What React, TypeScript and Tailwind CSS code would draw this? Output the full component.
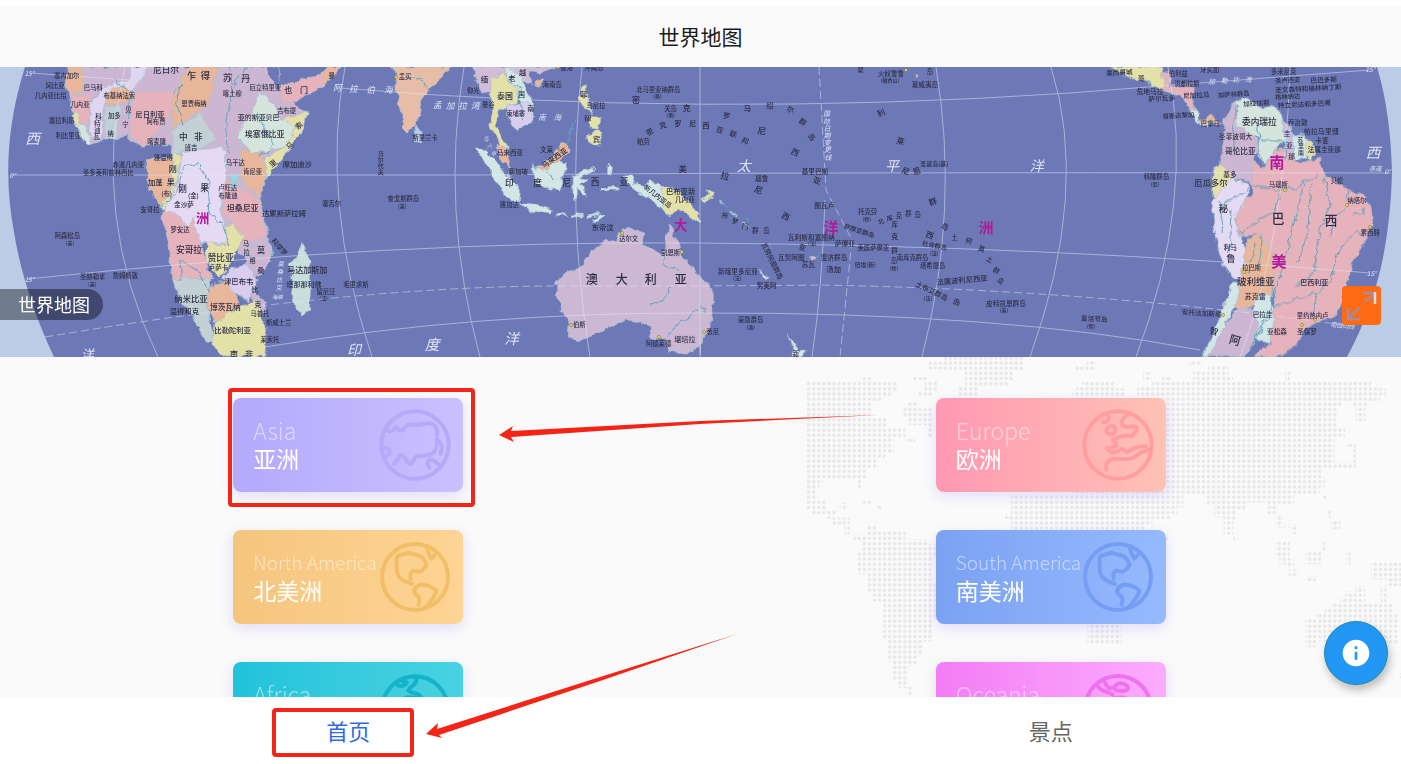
import { MdInfo } from 'react-icons/md';

type Label = [x: number, y: number, text: string, size?: number, rotate?: number];

interface MapSection {
  x: number;
  shapes: { fill: string; d: string }[];
  rivers: string[];
  labels: Label[];
  seas: Label[];
  regions: Label[];
}

interface Continent {
  en: string;
  zh: string;
  card: string;
  stroke: string;
  viewBox: string;
  circle: [number, number, number];
  paths: string[];
  long?: boolean;
  highlighted?: boolean;
}

const americas = [
  'M577 207C545 200 530 185 532 160C532 145 528 130 535 124C550 120 558 116 568 115C580 122 590 120 600 124C612 130 618 142 620 152C612 165 600 175 590 170C575 165 570 175 573 192',
  'M620 95C625 112 628 125 634 132L644 123',
  'M597 269C602 255 598 245 590 240C578 232 585 215 602 210C620 208 640 218 650 228C645 245 635 255 628 265C622 275 615 280 605 282',
];

const continents: Continent[] = [
  {
    en: 'Asia',
    zh: '亚洲',
    card: 'bg-linear-to-r from-[#b4a9fb] to-[#cbc0ff]',
    stroke: '#b5a9f8',
    viewBox: '475 88 216 216',
    circle: [583, 196, 101],
    paths: [
      'M503 154C515 158 520 150 525 142C533 150 545 160 552 144C558 132 570 132 583 135C605 138 610 128 628 131C648 136 652 150 649 168',
      'M649 180C650 205 640 222 625 226C610 230 600 228 586 231C578 236 578 250 570 254C562 250 556 245 554 235C545 225 540 222 535 232C530 240 525 245 520 253',
      'M649 180C658 185 670 198 659 222',
      'M487 207C497 203 508 206 507 218C506 224 503 226 500 228',
      'M627 265C618 255 618 242 630 240C640 240 648 250 655 256',
    ],
    highlighted: true,
  },
  {
    en: 'Europe',
    zh: '欧洲',
    card: 'bg-linear-to-r from-[#ff98b2] to-[#ffc2b5]',
    stroke: '#ff9da1',
    viewBox: '487 89 218 218',
    circle: [596, 198, 102],
    paths: [
      'M550 128C562 132 572 122 566 108',
      'M588 152C586 164 575 168 565 163C558 158 560 148 568 143C578 138 590 142 588 152',
      'M628 102C618 112 612 115 608 125C605 135 608 142 620 143C635 142 650 140 653 147C655 155 645 160 638 172C625 166 600 172 580 182C585 192 595 188 590 200C580 208 570 206 562 209C572 222 585 224 597 216C610 205 612 212 622 220C635 212 655 200 680 202',
      'M560 272C558 245 570 238 600 240C640 243 640 238 655 228C665 220 680 214 692 213',
    ],
  },
  {
    en: 'North America',
    zh: '北美洲',
    card: 'bg-linear-to-r from-[#f4c57e] to-[#ffd494]',
    stroke: '#f2be67',
    viewBox: '479 80 214 214',
    circle: [586, 187, 98],
    paths: americas,
    long: true,
  },
  {
    en: 'South America',
    zh: '南美洲',
    card: 'bg-linear-to-r from-[#7ba2f2] to-[#96baff]',
    stroke: '#759ef3',
    viewBox: '479 80 214 214',
    circle: [586, 187, 98],
    paths: americas,
    long: true,
  },
  {
    en: 'Africa',
    zh: '非洲',
    card: 'bg-linear-to-r from-[#1fc3da] to-[#48d2e2]',
    stroke: '#15b2ca',
    viewBox: '479 472 214 214',
    circle: [586, 580, 98],
    paths: [
      'M532 507C545 514 555 510 562 500L548 496',
      'M590 490C592 508 570 512 566 524C575 536 602 528 604 545C600 552 570 540 556 546C540 560 545 590 560 600C580 600 590 610 592 640C605 650 620 620 625 590',
    ],
  },
  {
    en: 'Oceania',
    zh: '大洋洲',
    card: 'bg-linear-to-r from-[#f27cf4] to-[#fcacff]',
    stroke: '#ee72ee',
    viewBox: '493 471 214 214',
    circle: [600, 578, 98],
    paths: [
      'M540 510C550 530 570 522 584 536',
      'M562 500C568 516 578 520 590 512C600 496 626 500 630 516C624 530 606 524 594 522',
      'M588 548C600 542 618 542 626 548C640 570 630 600 600 604C575 600 570 580 588 548',
    ],
  },
];

// Each section is a third-scale tile of the map, placed at its own x.
const sections: MapSection[] = [
  {
    x: 0,
    shapes: [
      { fill: '#ccb6d2', d: 'M215 20H800L835 90L860 100L900 150L925 155L905 215L870 270L800 345L780 420L810 545L815 600L780 640L700 560L520 540L512 250L410 258L380 225L320 240L265 255L220 180L205 100Z' },
      { fill: '#e8b69a', d: 'M205 20L250 20L250 95L210 105L195 70Z' },
      { fill: '#e6b2bc', d: 'M212 100L275 105L265 190L235 195L212 150Z' },
      { fill: '#e3e0a8', d: 'M215 155L240 165L245 220L222 190Z' },
      { fill: '#d5e4dc', d: 'M240 195L262 200L270 250L262 256L232 222Z' },
      { fill: '#e0d6f2', d: 'M270 130L300 95L330 70L390 60L395 20L440 20L430 60L380 100L310 130L305 235L270 235Z' },
      { fill: '#e8b69a', d: 'M330 85L375 75L410 105L380 130L308 128Z' },
      { fill: '#bfd0d8', d: 'M318 135L362 135L350 235L312 240Z' },
      { fill: '#e6b2bc', d: 'M400 100L520 88L528 125L495 190L460 230L435 260L412 250L385 222Z' },
      { fill: '#e8b69a', d: 'M560 20L655 20L625 130L540 195L512 205L520 105Z' },
      { fill: '#c3d0d4', d: 'M515 215L600 158L645 235L620 262L560 268L520 290Z' },
      { fill: '#d5e4dc', d: 'M775 100L822 130L845 180L890 200L850 262L760 282L715 235L720 200L758 160Z' },
      { fill: '#e3e0a8', d: 'M845 180L925 155L905 215L860 280L800 358L795 290L850 262L890 200Z' },
      { fill: '#e6b2bc', d: 'M845 75L960 45L975 75L900 118L843 138Z' },
      { fill: '#e8b69a', d: 'M958 45L985 20L1025 22L975 75Z' },
      { fill: '#6c79b6', d: 'M800 20H836L842 70L840 92L822 70Z' },
      { fill: '#e8b69a', d: 'M722 268L790 285L800 345L780 415L720 355Z' },
      { fill: '#e8b69a', d: 'M440 300L520 290L515 400L480 440L445 380Z' },
      { fill: '#e3e0a8', d: 'M520 280L545 290L525 380L500 455L480 440L510 400Z' },
      { fill: '#e4daf4', d: 'M548 275L670 262L680 350L660 460L690 550L600 545L530 480L490 455L530 380Z' },
      { fill: '#e6b2bc', d: 'M690 360L780 420L785 490L805 530L730 550L700 490L665 460L668 385Z' },
      { fill: '#8fdbe2', d: 'M694 346L714 348L712 388L696 384Z' },
      { fill: '#e6b2bc', d: 'M485 455L530 460L560 500L580 475L600 540L635 660L515 655L508 560Z' },
      { fill: '#e3e0a8', d: 'M620 545L680 555L675 500L700 490L730 530L700 600L660 655L615 600Z' },
      { fill: '#d8cdee', d: 'M690 625L740 615L775 660L745 725L700 700L670 655Z' },
      { fill: '#ccb6d2', d: 'M745 560L812 545L815 600L775 645L760 690L797 730L795 760L765 740L750 700L775 660L740 615Z' },
      { fill: '#c3d0d4', d: 'M515 655L630 660L620 740L645 845L620 850L575 760L540 720Z' },
      { fill: '#e8b69a', d: 'M630 675L680 665L725 740L685 790L645 790L620 740Z' },
      { fill: '#e3e0a8', d: 'M645 790L720 740L765 720L785 765L797 830L795 888H665L640 850Z' },
      { fill: '#c7deda', d: 'M905 545L918 572L930 600L932 680L928 755L905 762L885 735L875 705L880 660L868 615L888 590Z' },
    ],
    rivers: [
      'M690 20L695 90L740 20M685 280L680 190L695 90M520 100L545 70L530 130L550 200',
      'M480 445L530 400L550 320L600 310L630 370L625 450L670 500L690 560',
      'M380 180L390 90L340 60M780 290L820 260L770 160M545 660L540 600L600 640L630 700',
    ],
    labels: [
      [200, 48, '塞内加尔'], [165, 78, '冈比亚'], [152, 108, '几内亚比绍'], [240, 133, '几内亚'], [185, 183, '塞拉利昂'],
      [205, 228, '利比里亚'], [280, 84, '巴马科'], [358, 108, '布基纳法索'], [450, 160, '尼日利亚', 22], [468, 186, '阿布贾'],
      [498, 26, '尼日尔', 26], [575, 44, '乍', 28], [616, 44, '得', 28], [682, 52, '苏', 28], [737, 54, '丹', 28],
      [582, 130, '恩贾梅纳'], [697, 100, '喀土穆'], [796, 82, '厄立特里亚'], [865, 88, '也', 24], [912, 88, '门', 24],
      [860, 152, '吉布提'], [776, 172, '亚的斯亚贝巴', 21], [794, 220, '埃塞俄比亚', 24], [550, 228, '中', 26], [595, 228, '非', 26],
      [573, 264, '班吉'], [470, 245, '喀麦隆'], [490, 292, '雅温得'], [385, 314, '赤道几内亚'], [325, 338, '圣多美和普林西比'],
      [466, 366, '加蓬', 22], [518, 326, '刚', 24], [512, 366, '果', 24], [500, 402, '(布)'], [548, 383, '刚', 26], [614, 382, '果', 26],
      [580, 407, '(金)'], [552, 431, '金沙萨', 20], [450, 448, '安哥拉'], [706, 308, '乌干达'], [758, 335, '肯尼亚'], [683, 382, '卢旺达'],
      [684, 408, '布隆迪'], [728, 444, '坦桑尼亚', 24], [852, 458, '达累斯萨拉姆', 22], [995, 432, '塞舌尔'], [892, 312, '摩加迪沙', 22],
      [895, 195, '索', 22, -40], [868, 255, '马', 22, -40], [818, 308, '里', 22, -40], [540, 508, '罗安达'], [567, 566, '安哥拉', 26],
      [662, 592, '赞比亚', 26], [655, 622, '卢萨卡'], [738, 550, '马'], [740, 578, '拉'], [758, 602, '维'], [783, 570, '莫', 24], [783, 630, '桑', 22],
      [840, 560, '科摩罗', 20, 50], [922, 628, '马达加斯加', 24], [912, 672, '塔那那利佛', 21], [1068, 673, '毛里求斯'], [978, 694, '留尼汪'],
      [971, 714, '(法)', 15], [716, 662, '津巴布韦', 22], [765, 686, '比', 20], [573, 714, '纳米比亚', 25], [553, 752, '温得和克', 22],
      [676, 740, '博茨瓦纳', 23], [774, 732, '克', 22], [780, 762, '马普托'], [836, 788, '斯威士兰'], [698, 808, '比勒陀利亚', 22], [810, 840, '莱索托'],
      [702, 882, '南', 24], [747, 882, '非', 24], [202, 527, '阿森松岛'], [210, 548, '(英)', 15], [278, 650, '圣赫勒拿'], [277, 672, '(英)', 15],
      [376, 648, '詹姆斯敦'], [295, 170, '科'], [292, 190, '特'], [292, 211, '迪'], [290, 230, '瓦'], [343, 168, '加多'], [332, 222, '纳'],
      [385, 148, '贝'], [376, 193, '宁'], [995, 46, '曼'],
    ],
    seas: [[98, 232, '西', 44], [262, 882, '洋', 38], [1012, 82, '阿', 26], [88, 38, '15°', 20], [38, 346, '0°', 20], [88, 656, '15°', 20], [842, 610, '莫', 18], [840, 634, '桑', 18], [838, 658, '比', 18], [836, 682, '克', 18], [832, 712, '海峡', 16]],
    regions: [[608, 474, '洲', 40]],
  },
  {
    x: 350,
    shapes: [
      { fill: '#e8bda8', d: 'M120 20H305L275 52L240 80L212 120L210 145L208 165L190 200L172 217L160 205L150 150L138 90L142 40Z' },
      { fill: '#b9cbe8', d: 'M198 195L215 220L212 248L195 245Z' },
      { fill: '#d2bdd8', d: 'M368 20H620L570 40L540 30L545 70L500 60L450 40L420 95L390 100L375 50Z' },
      { fill: '#e8b69a', d: 'M560 55L578 60L572 78L555 72Z' },
      { fill: '#e3e0a8', d: 'M425 55L460 40L510 80L505 130L450 150L435 195L480 270L455 260L418 195L430 150L420 90Z' },
      { fill: '#d3e6e6', d: 'M470 20L510 50L550 130L550 180L500 215L490 195L530 160L500 90L470 60Z' },
      { fill: '#d8cdee', d: 'M470 140L525 130L548 140L545 185L500 213L470 170Z' },
      { fill: '#e8b69a', d: 'M440 255L470 265L486 325L450 300Z' },
      { fill: '#d3e6e6', d: 'M378 262L410 275L435 300L460 330L490 365L508 395L505 425L470 410L430 350L400 300Z' },
      { fill: '#d3e6e6', d: 'M508 428L550 432L610 450L602 462L540 452Z' },
      { fill: '#d3e6e6', d: 'M545 312L560 330L625 300L650 315L630 390L600 390L560 375Z' },
      { fill: '#e8b69a', d: 'M560 325L600 300L640 248L665 270L630 300L590 325Z' },
      { fill: '#d3e6e6', d: 'M670 350L690 335L730 322L738 330L690 348L715 362L690 372L712 408L698 408L682 382L682 420L668 418Z' },
      { fill: '#e3e0a8', d: 'M695 80L712 78L710 110L730 165L718 150L700 140L688 120ZM705 240L745 205L757 225L752 255L735 255ZM710 165L750 175L745 205L720 200Z' },
      { fill: '#d3e6e6', d: 'M815 350L845 345L850 370L880 380L900 362L940 375L940 455L900 415L860 392L840 375Z' },
      { fill: '#d3e6e6', d: 'M775 310L785 320L780 345L772 340ZM750 385L808 382L806 390L752 392ZM622 460L650 462V467L622 466ZM665 464L700 466V471L665 470ZM715 465L745 460L748 466L718 471ZM725 485L755 462L765 466L735 488Z' },
      { fill: '#e3e0a8', d: 'M940 372L990 398L1015 425L1055 485L1025 475L990 450L960 470L935 455Z' },
      { fill: '#ccb8d2', d: 'M805 515L840 505L885 515L880 550L915 572L938 588L948 535L958 492L970 530L986 548L990 580L1000 600L1030 625L1055 655L1080 690V810L1055 855L1010 885L985 882L960 870L945 840L925 832L905 838L900 800L870 785L830 780L795 795L760 812L720 830L690 842L658 835L660 790L640 755L625 720L618 670L640 640L675 630L700 615L715 585L740 558L770 540L800 545Z' },
    ],
    rivers: [
      'M955 830L990 785L1060 745M900 740L940 720L965 680M940 590L945 620L990 630M470 60L510 90L515 180M180 55L220 65L240 95M590 330L610 360M650 260L675 180',
    ],
    labels: [
      [165, 50, '孟买'], [225, 234, '斯里兰卡'], [92, 282, '马', 18], [92, 300, '尔', 18], [92, 318, '代', 18], [92, 336, '夫', 18],
      [160, 415, '查戈斯群岛'], [157, 436, '(英)', 15], [403, 55, '缅', 22], [370, 92, '仰光'], [486, 52, '老', 22], [518, 34, '越', 22],
      [465, 108, '泰国', 24], [515, 103, '国', 20], [542, 144, '南', 20], [415, 135, '曼谷'], [497, 160, '柬埔寨'], [607, 74, '海南岛'], [650, 24, '香港'],
      [732, 24, '冲绳岛'], [480, 277, '马来西亚', 20], [590, 268, '文莱'], [612, 292, '马来西亚', 22, -35], [505, 335, '新加坡'], [478, 366, '印', 26],
      [563, 366, '度', 26], [650, 366, '尼', 26], [735, 364, '西', 26], [822, 364, '亚', 26], [478, 434, '雅加达'], [758, 500, '东帝汶', 22],
      [702, 102, '菲', 22], [738, 136, '马尼拉'], [714, 174, '律', 22], [740, 236, '宾', 22], [925, 88, '北马里亚纳群岛'], [922, 108, '(美)', 15],
      [858, 118, '密', 24], [1010, 143, '克', 24], [962, 146, '关岛'], [962, 164, '(美)', 15], [898, 214, '密', 22, -35], [938, 193, '克', 22, -15],
      [984, 188, '罗', 22], [1028, 188, '尼', 22], [880, 244, '帕劳', 20], [998, 326, '美', 24],
      [992, 392, '巴布亚新', 22], [1005, 416, '几内亚', 20], [925, 408, '新几内亚岛', 20, 38], [836, 536, '达尔文', 19], [962, 578, '凯恩斯', 19],
      [725, 656, '澳', 36], [815, 656, '大', 36], [902, 656, '利', 36], [992, 656, '亚', 36], [688, 795, '伯斯'], [926, 850, '阿德莱德', 19], [1005, 838, '堪培拉', 21],
    ],
    seas: [[10, 84, '拉', 26], [62, 86, '伯', 26], [115, 88, '海', 26], [262, 132, '孟', 26], [300, 134, '加', 26], [338, 134, '拉', 26], [376, 134, '湾', 26], [576, 170, '南', 22], [622, 170, '海', 22], [408, 236, '马', 16], [418, 258, '六', 16], [430, 282, '甲', 16], [12, 868, '印', 42], [246, 852, '度', 44], [485, 834, '洋', 44]],
    regions: [[992, 494, '大', 40]],
  },
  {
    x: 700,
    shapes: [
      { fill: '#ccb8d2', d: 'M0 655L25 670L40 710L38 780L15 820L0 880Z' },
      { fill: '#d3e6e6', d: 'M262 825L290 855L295 875L320 872L300 888H275L285 860ZM178 625L205 655L195 660Z' },
      { fill: '#e6b2bc', d: 'M332 590L345 588L348 600L334 600ZM645 42L655 45L652 58Z' },
      { fill: '#e3e0a8', d: 'M20 385L40 395L35 415L10 425L0 415L28 408ZM62 420L75 435L65 432ZM88 455L112 468L108 472ZM125 485L145 495L140 500Z' },
    ],
    rivers: ['M0 740L15 745V758M60 425L80 440M95 455L120 475M135 470L155 485M350 590L362 575M205 550L215 570'],
    labels: [
      [482, 28, '夏'], [573, 38, '火奴鲁鲁', 20], [570, 58, '(檀香山)', 15], [675, 72, '夏威夷岛', 20], [690, 36, '岛'], [80, 166, '罗', 22, 10],
      [142, 142, '马', 22], [210, 134, '绍', 22], [272, 146, '尔', 22, 20], [310, 184, '群', 22, 35], [337, 230, '岛', 22, 50], [18, 195, '西', 22],
      [60, 208, '亚', 22, 15], [100, 220, '联', 22, 15], [136, 241, '邦', 22, 20], [186, 210, '尼', 26, 10], [286, 275, '西', 24, 25], [76, 346, '拉', 26, 15],
      [185, 354, '瑙鲁', 20], [177, 388, '尼', 26, 20], [345, 334, '基里巴斯', 20], [352, 360, '亚', 24, 20], [373, 434, '图瓦卢', 20], [258, 468, '西', 24, 30],
      [76, 466, '所', 20, 15], [106, 482, '罗', 20, 15], [136, 498, '门', 20, 10], [166, 510, '群', 20], [200, 510, '岛', 20], [543, 157, '利', 24, -25],
      [602, 242, '莱', 24, 15], [618, 332, '尼', 24, 20], [650, 332, '恩', 24, -20], [703, 312, '圣诞岛(基)', 18], [698, 423, '群', 24, -20], [736, 498, '岛', 22, 30],
      [503, 456, '托克劳', 19], [500, 475, '(新)', 15], [543, 484, '北', 19, -20], [569, 474, '库', 19, -10], [597, 466, '克', 19], [625, 462, '群', 19], [653, 464, '岛', 19],
      [584, 494, '库'], [584, 528, '克', 22], [584, 570, '群', 20], [582, 602, '岛'], [582, 624, '(新)', 15], [478, 512, '萨摩亚群岛', 19, 18],
      [334, 530, '瓦利斯和富图纳', 20], [337, 549, '(法)', 15], [308, 560, '亚', 22, 20], [435, 550, '萨摩亚', 20], [520, 562, '美属萨摩亚', 19],
      [274, 590, '瓦努阿图', 20], [402, 591, '斐济群岛', 20], [325, 612, '苏瓦', 20], [401, 625, '汤加', 22], [496, 613, '纽埃(新)', 17],
      [218, 602, '瓦努阿图群岛', 20, 64], [114, 633, '新喀里多尼亚', 20], [112, 653, '(法)', 15], [200, 676, '努美阿', 20], [690, 524, '西', 24, 20],
      [704, 556, '社会群岛', 19, 12], [703, 578, '(法)', 15], [638, 594, '南库克群岛', 19], [698, 617, '塔希提岛', 19], [763, 532, '土'], [807, 542, '阿', 20, 10],
      [846, 565, '莫', 20, 20], [870, 597, '土', 20, 30], [890, 630, '群', 20, 30], [903, 662, '岛', 20, 40], [786, 658, '法属波利尼西亚', 22, -5],
      [696, 692, '土布艾群岛', 21, 26], [770, 724, '岛', 22, 15], [684, 714, '(法)', 15], [918, 728, '皮特凯恩群岛', 20], [912, 748, '(英)', 15],
      [152, 779, '豪勋爵岛', 19], [152, 800, '(澳)', 15], [38, 816, '悉尼'], [288, 882, '新'],
    ],
    seas: [[132, 316, '太', 42], [576, 314, '平', 42], [1010, 314, '洋', 42], [380, 160, '国', 20], [380, 183, '际', 20], [381, 204, '日', 20], [381, 226, '期', 20], [382, 247, '变', 20], [383, 268, '更', 20], [384, 290, '线', 20]],
    regions: [[393, 500, '洋', 44], [858, 500, '洲', 44]],
  },
  {
    x: 1041,
    shapes: [
      { fill: '#e3e0a8', d: 'M205 20H365L372 60L400 95L430 105L385 100L320 65L270 55Z' },
      { fill: '#e6b2bc', d: 'M360 40L385 35L390 75L460 85L455 130L470 160L445 145L420 105L370 90Z' },
      { fill: '#d3e6e6', d: 'M440 145L465 150L480 190L500 200L520 180L478 195Z' },
      { fill: '#e8b69a', d: 'M475 180L510 165L545 190L525 195L505 180L485 200Z' },
      { fill: '#ccb6d2', d: 'M548 190L570 140L590 115L600 120L590 160L630 220L660 260L640 300L645 375L560 345L535 310L548 250Z' },
      { fill: '#d5e4dc', d: 'M585 120L620 115L655 140L710 140L730 190L735 240L700 270L670 315L655 290L650 235L590 200Z' },
      { fill: '#c9bce2', d: 'M722 180L750 195L765 305L735 290L730 240Z' },
      { fill: '#d3e6e6', d: 'M755 220L795 225L800 290L765 300Z' },
      { fill: '#e3e0a8', d: 'M793 230L825 265L808 300L795 285Z' },
      { fill: '#e3e0a8', d: 'M518 325L535 312L575 345L545 390L525 425L512 405Z' },
      { fill: '#e6b2bc', d: 'M632 310L670 320L700 270L735 265L765 310L810 300L842 295L835 325L845 340L875 355L905 380L960 405L990 440L995 490L970 550L945 590L930 615L925 650L905 720L880 770L835 782L800 800L770 845L745 870L720 890H635L690 850L680 780L700 740L700 600L660 520L600 530L580 460L610 420L640 400Z' },
      { fill: '#e4daf4', d: 'M512 425L545 390L570 350L630 380L610 430L580 470L600 530L622 600L600 665L560 640L535 580L520 500Z' },
      { fill: '#e8b69a', d: 'M620 535L660 520L700 590L700 670L690 720L600 750L580 735L600 640Z' },
      { fill: '#d3e6e6', d: 'M575 665L595 680L580 740L550 800L510 890H485L530 790Z' },
      { fill: '#d3e6e6', d: 'M655 700L690 705L700 790L685 850L650 840L630 770Z' },
      { fill: '#ccb6d2', d: 'M590 745L630 745L655 800L640 850L615 890H500L545 810Z' },
    ],
    rivers: [
      'M535 420L545 440L540 520M545 425L600 405L640 375L700 390L760 385L830 345M570 450L565 580M600 520L700 450L720 400',
      'M790 370L750 520L720 640L690 740L620 885M810 370L800 520L770 610M850 350L865 440L830 540L820 640L760 680',
      'M970 530L945 510L890 580L870 660L830 700L810 770M915 420L925 390M870 530L880 470L915 440M940 460L965 465L970 440',
      'M650 190L655 270L670 320M590 140L575 200L580 270M665 520L655 620M640 550L620 640M650 830L700 740L820 700M660 240L730 245L730 300',
    ],
    labels: [
      [235, 36, '墨西哥城', 20, -3], [300, 54, '哥', 20], [412, 42, '伯利兹'], [506, 30, '牙买加'], [327, 92, '危地马拉', 20], [438, 72, '洪都拉斯', 19],
      [362, 114, '萨尔瓦多', 20, -3], [466, 104, '尼加拉瓜', 20, -3], [578, 102, '加萨林群岛', 19, -4], [412, 166, '哥斯达黎加', 19, -4], [508, 190, '巴拿马'],
      [728, 36, '多米尼克'], [740, 60, '圣卢西亚', 19, -2], [848, 58, '巴巴多斯', 20, -3], [802, 84, '圣文森特和格林纳丁斯', 20, -3], [740, 109, '格林纳达', 19, -3],
      [790, 131, '特立尼达和多巴哥', 20, -3], [646, 128, '加拉加斯', 20, -4], [655, 184, '委内瑞拉', 26], [770, 187, '乔治敦', 20], [841, 214, '帕拉马里博', 21],
      [843, 240, '卡宴', 20], [850, 268, '法属圭亚那', 20], [738, 218, '圭', 20], [745, 254, '亚', 20], [752, 288, '那', 20], [778, 238, '苏', 18], [780, 258, '里', 18], [780, 277, '南', 18],
      [584, 229, '圣菲波哥大', 20], [598, 273, '哥伦比亚', 23], [567, 341, '基多', 20], [510, 367, '厄瓜多尔', 25], [346, 350, '科隆群岛', 19], [342, 370, '(厄)', 15],
      [547, 443, '秘', 28], [570, 594, '鲁', 28], [568, 560, '利马', 20], [712, 375, '马瑙斯', 19], [711, 472, '巴', 38], [870, 480, '西', 38], [888, 361, '贝伦'],
      [948, 422, '纳塔尔'], [988, 518, '累西腓', 19], [632, 624, '拉巴斯', 19], [645, 664, '玻利维亚', 28], [643, 708, '苏克雷', 21], [820, 665, '巴西利亚', 21],
      [815, 766, '里约热内卢', 19], [798, 813, '圣保罗', 20], [665, 762, '巴拉圭', 20], [708, 812, '亚松森', 20], [482, 758, '安托法加斯塔', 20, 4],
      [160, 775, '复活节岛', 20, 3], [150, 796, '(智)', 15], [520, 812, '智', 26, 15], [583, 838, '阿', 34, 15],
    ],
    seas: [[512, 64, '加', 20], [550, 60, '勒', 20], [585, 58, '比', 20], [622, 56, '海', 20], [996, 274, '西', 44], [1003, 325, '赤道', 19], [1040, 334, '0°', 20], [992, 640, '15°', 20], [988, 28, '15°', 20], [905, 796, '南回归线', 18, 6]],
    regions: [[708, 302, '南', 46], [714, 599, '美', 46]],
  },
];

function MapText({ items, className }: { items: Label[]; className: string }) {
  return (
    <g className={className} textAnchor="middle" dominantBaseline="central">
      {items.map(([x, y, text, size = 19, rotate = 0], index) => (
        <text key={index} x={x} y={y} fontSize={size} transform={`rotate(${rotate} ${x} ${y})`}>
          {text}
        </text>
      ))}
    </g>
  );
}

function WorldMap() {
  return (
    <svg
      viewBox="0 67 1401 290"
      preserveAspectRatio="xMidYMid slice"
      className="block h-full w-full bg-[#bacce6]"
      role="img"
      aria-label="世界地图"
    >
      <defs>
        {/* Roughens straight polygon edges into coastlines */}
        <filter id="coast" x="-5%" y="-5%" width="110%" height="110%">
          <feTurbulence type="fractalNoise" baseFrequency="0.12" numOctaves={3} seed={4} result="noise" />
          <feDisplacementMap in="SourceGraphic" in2="noise" scale={7} xChannelSelector="R" yChannelSelector="G" />
          <feGaussianBlur stdDeviation={0.4} />
        </filter>
      </defs>

      <path fill="#6c79b6" d="M25 67C5 130 5 185 14 232C20 270 34 315 54 357H1347C1375 305 1390 250 1392 172C1391 135 1387 100 1377 67Z" />

      <g filter="url(#coast)">
        {sections.map((section) => (
          <g key={section.x} transform={`translate(${section.x} 60) scale(.3333)`}>
            {section.shapes.map((shape, index) => (
              <path key={index} d={shape.d} fill={shape.fill} stroke="#a9c4d2" strokeWidth={2} strokeLinejoin="round" />
            ))}
            <g fill="none" stroke="#5fa3bd" strokeWidth={3} strokeLinejoin="round">
              {section.rivers.map((d) => (
                <path key={d} d={d} />
              ))}
            </g>
          </g>
        ))}
      </g>

      {/* Graticule */}
      <g fill="none" stroke="#e6eaf8" strokeWidth={1} opacity={0.5}>
        <path d="M30 73L130 80M340 88Q700 118 1070 93L1370 70" />
        <path d="M10 175H480Q740 172 1391 173" />
        <path d="M27 279Q400 240 700 243Q1050 246 1370 273" />
        <path d="M265 347Q480 312 700 313Q1000 312 1200 350" />
        <path d="M45 337Q350 286 560 286T820 285Q1100 290 1350 326" strokeDasharray="8 4" />
        <path d="M125 67Q90 215 158 357M345 67Q320 200 372 357M464 67Q440 210 480 357M582 67Q566 210 590 357M700 67V357" />
        <path d="M936 67Q960 210 922 357M1051 67Q1090 190 1030 357M1168 67Q1195 200 1136 357M1290 67Q1285 240 1240 357" />
        <path d="M819 67L826 190L852 240L840 357" strokeDasharray="8 4" />
        <path d="M825 200Q822 290 812 357" />
      </g>

      {sections.map((section) => (
        <g key={section.x} transform={`translate(${section.x} 60) scale(.3333)`}>
          <MapText items={section.labels} className="fill-[#2c2c44] font-medium" />
          <MapText items={section.seas} className="fill-[#dfe4f4] italic" />
          <MapText items={section.regions} className="fill-[#b5189a] font-bold" />
        </g>
      ))}

      <g fill="#e4dc3c" stroke="#6b6a3a" strokeWidth={0.5}>
        {[[396, 77], [558, 67], [622, 233], [682, 252], [571, 325], [659, 337], [704, 332], [906, 70], [1285, 190], [1347, 205], [1370, 227], [1244, 272], [1223, 315], [1302, 325], [1315, 320]].map(([x, y]) => (
          <circle key={`${x}-${y}`} cx={x} cy={y} r={1.6} />
        ))}
      </g>
    </svg>
  );
}

function DottedWorld() {
  return (
    <svg viewBox="800 357 601 340" className="absolute top-0 right-0 h-[340px] w-[601px]" aria-hidden="true">
      <defs>
        <pattern id="dots" x={806.2} y={381.2} width={5.06} height={5.16} patternUnits="userSpaceOnUse">
          <circle cx={2.5} cy={2.5} r={1.8} fill="#e8e8ea" />
        </pattern>
        <clipPath id="land">
          <path
            transform="translate(800 350) scale(.3833 .3349)"
            d="M17 93H160V80H188V93H240V138H217V155H188V200H225V230H275V275H300V262H245V310H222V325H205V355H175V385H60V410H45V450H70V480H120V455H105V475L85 500H130V550H115V525H85V505H70V490H30V475H17Z
              M295 80H335V95H358V125H345V140H310V125H325V95H295ZM335 35H375V20H585V65H557V95H545V110H465V138H415V110H430V65H375V58H335Z
              M242 95H255V125H242ZM282 155H308V175H345V260H332V225H282V200H270V170H282ZM150 380H162V415H150ZM165 448H188V462H165ZM200 462H215V475H200Z
              M140 550H175V525H200V540H275V565H330V580H360V620H345V700H360V800H345V870H320V915H305V945H282V1005H295V1040H282V1010H255V990H242V930H230V860H217V750H190V720H175V670H150V600H162V568H140Z
              M720 50H748V33H772V60H720ZM895 65H917V92H895ZM1015 33H1050V48H1015ZM710 125H722V110H735V95H825V115H850V138H880V108H920V95H945V80H970V93H1025V62H1065V48H1118V78H1130V93H1265V62H1278V93H1490V108H1505V115H1528V140H1515V155H1480V175H1475V213H1450V175H1440V155H1415V170H1400V230H1422V258H1395V350H1360V380H1370V410H1355V430H1290V460H1245V490H1260V520H1300V550H1285V530H1240V490H1215V455H1165V480H1140V510H1130V550H1105V500H1080V460H1055V430H1000V470H985V490H965V505H920V520H900V550H960V570H840V880H750V820H735V560H550V505H535V490H550V430H710Z
              M1425 280H1450V353H1370V335H1440V290H1425ZM1375 480H1385V510H1410V535H1385V500H1375ZM1240 570H1278V625H1290V650H1265V640H1250V620H1240ZM1318 600H1370V570H1360V640H1318ZM1425 600H1437V640H1425ZM1490 635H1568V705H1530V685H1490ZM1275 655H1300V675H1275ZM1320 675H1345V690H1320ZM1370 430H1378V445H1363V430Z
              M1318 800H1345V785H1370V770H1385V755H1410V740H1422V720H1450V705H1475V755H1515V705H1530V755H1545V790H1560V880H1380V870H1345V888H1318ZM1565 965H1580V980H1565ZM1130 555H1142V568H1130Z"
          />
        </clipPath>
      </defs>
      <rect x={800} y={357} width={601} height={340} fill="url(#dots)" clipPath="url(#land)" />
    </svg>
  );
}

function ContinentCard({ continent }: { continent: Continent }) {
  const [cx, cy, r] = continent.circle;

  return (
    <div className="relative">
      <button
        className={`flex h-[94px] w-[230px] items-center justify-between rounded-lg pr-3 pl-5 text-left shadow-[0_4px_14px_rgba(110,90,240,0.18)] ${continent.card}`}
      >
        <span className="flex flex-col pb-[3px] whitespace-nowrap text-white">
          <span className={`leading-[28px] font-light opacity-50 ${continent.long ? 'text-[19px]' : 'text-[23px]'}`}>
            {continent.en}
          </span>
          <span className="text-[23px] leading-[28px]">{continent.zh}</span>
        </span>
        <svg
          viewBox={continent.viewBox}
          className="-ml-6 size-[72px] shrink-0"
          fill="none"
          stroke={continent.stroke}
          strokeWidth={12}
          strokeLinecap="round"
          strokeLinejoin="round"
          aria-hidden="true"
        >
          <circle cx={cx} cy={cy} r={r} />
          {continent.paths.map((d) => (
            <path key={d} d={d} />
          ))}
        </svg>
      </button>
      {continent.highlighted && (
        <div className="pointer-events-none absolute -top-[10px] -left-[5px] h-[119px] w-[247px] rounded-sm border-4 border-[#f42516]" />
      )}
    </div>
  );
}

export default function App() {
  return (
    <div className="relative flex h-screen flex-col overflow-hidden bg-[#fafafa] font-['Noto_Sans_CJK_SC',sans-serif]">
      <header className="flex h-[67px] shrink-0 items-center justify-center border-t-[6px] border-white">
        <h1 className="text-[21px] text-[#1c1c1c]">世界地图</h1>
      </header>

      {/* Map banner */}
      <section className="relative h-[290px] shrink-0 overflow-hidden">
        <WorldMap />
        <span className="absolute bottom-[37px] left-0 flex h-[31px] items-center rounded-r-full bg-black/40 pr-[13px] pl-[18px] text-[18px] text-white">
          世界地图
        </span>
        <button
          aria-label="全屏"
          className="absolute right-5 bottom-8 flex size-[39px] items-center justify-center rounded-sm bg-[#ff6a13]"
        >
          <svg viewBox="0 0 39 39" className="size-full" fill="none" strokeWidth={2.5}>
            <path stroke="#a98a95" d="M21 7H33M32 8L23 16" />
            <path stroke="#e2e0ee" d="M33 6V18" />
            <path stroke="#a98a95" d="M6 22V33H18M7 32L17 22" />
          </svg>
        </button>
      </section>

      {/* Continents */}
      <main className="relative min-h-0 flex-1 overflow-hidden">
        <DottedWorld />
        <div className="relative grid grid-cols-2 gap-y-[38px] pt-[41px]">
          {continents.map((continent) => (
            <div key={continent.en} className="flex justify-center odd:pr-1">
              <ContinentCard continent={continent} />
            </div>
          ))}
        </div>
      </main>

      <nav className="grid h-[67px] shrink-0 grid-cols-2 bg-white text-[22px]">
        <a href="#home" className="relative flex items-center justify-center pr-1 text-[#2f6be0]">
          首页
          <span className="absolute top-[11px] left-1/2 -ml-[78px] h-[49px] w-[142px] rounded-sm border-4 border-[#f42516]" />
        </a>
        <a href="#spots" className="flex items-center justify-center text-[#666]">
          景点
        </a>
      </nav>

      <button
        aria-label="信息"
        className="absolute right-[13px] bottom-[79px] flex size-16 items-center justify-center rounded-full border border-[#1a8aa5] bg-[#2196f3] text-white shadow-[2px_5px_9px_rgba(0,0,0,0.25)]"
      >
        <MdInfo className="size-8" />
      </button>

      {/* Pointer arrows */}
      <svg viewBox="0 0 1401 764" className="pointer-events-none absolute inset-0 size-full" fill="#f42516" aria-hidden="true">
        <path d="M499 435L513 426L511 431L700 421L878 415L700 424L511 437L514 442Z" />
        <path d="M426 734L438 723L437 729L600 677L737 634L600 681L439 735L442 738Z" />
      </svg>
    </div>
  );
}
